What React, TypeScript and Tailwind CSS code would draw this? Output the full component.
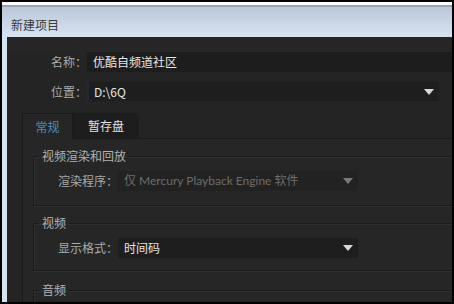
import React from "react";

const font = { fontFamily: '"Microsoft YaHei", "Noto Sans CJK SC", "Noto Sans", sans-serif' };
const latin = { fontFamily: 'Lato, "Noto Sans CJK SC", sans-serif' };

function Arrow({ dim = false }: { dim?: boolean }) {
  return (
    <svg width="10" height="6" viewBox="0 0 10 6" className="shrink-0">
      <path d="M0 0 H10 L5 6 Z" fill={dim ? "#7a7a7a" : "#d8d8d8"} />
    </svg>
  );
}

function Group({ title, children, className = "" }: { title: string; children?: React.ReactNode; className?: string }) {
  return (
    <fieldset className={`border border-[#1a1a1a] shadow-[inset_1px_1px_0_#303030,1px_1px_0_#303030] ${className}`}>
      <legend className="ml-[5px] px-[3px] text-[12px] leading-[16px] text-[#b2b2b2]">{title}</legend>
      {children}
    </fieldset>
  );
}

export default function App() {
  return (
    <div className="w-[454px] h-[304px] bg-black overflow-hidden flex flex-col pt-[2px] pl-[2px] pr-[2px] pb-[2px]" style={font}>
      <div className="h-[3px] bg-white shrink-0" />
      <div className="h-[2px] bg-[#9aa3ad] shrink-0" />
      <div className="flex-1 flex flex-col bg-[#d5e2f0] overflow-hidden">
        {/* title bar */}
        <div className="h-[30px] shrink-0 bg-gradient-to-b from-[#b9c8d9] to-[#d6e3f1] flex items-center pl-[9px] pt-[6px]">
          <span className="text-[12px] text-[#3a3a3a]">新建项目</span>
        </div>

        {/* dark content */}
        <div className="flex-1 ml-[5px] bg-[#242424] overflow-hidden flex flex-col">
          <div className="h-[15px] bg-[#262626] shrink-0" />
          <div className="flex items-center h-[20px] shrink-0">
            <span className="w-[80px] text-right text-[12px] text-[#a9a9a9]">名称：</span>
            <div className="flex-1 h-full bg-[#1d1d1d] flex items-center pl-[6px] text-[12px] text-[#e6e6e6]">
              优酷自频道社区
            </div>
          </div>
          <div className="flex items-center h-[19px] mt-[10px] shrink-0">
            <span className="w-[80px] text-right text-[12px] text-[#a9a9a9]">位置：</span>
            <div className="w-[352px] h-full bg-[#1e1e1e] flex items-center pl-[5px] pr-[5px] text-[12px] text-[#e6e6e6] border-l-2 border-[#1c2a3a]">
              <span className="flex-1">D:\6Q</span>
              <Arrow />
            </div>
          </div>

          {/* tabs */}
          <div className="ml-[15px] mt-[12px] flex h-[26px] shrink-0">
            <div className="w-[51px] bg-[#262626] border border-b-0 border-[#1a1a1a] flex items-center justify-center text-[12px] text-[#3f8fcf]">
              常规
            </div>
            <div className="w-[66px] bg-[#1d1d1d] border-b border-[#1a1a1a] flex items-center justify-center text-[12px] text-[#e2e2e2]">
              暂存盘
            </div>
            <div className="flex-1 border-b border-[#1a1a1a]" />
          </div>

          {/* panel */}
          <div className="ml-[15px] mr-[-20px] flex-1 bg-[#262626] border-l border-[#1a1a1a] pl-[10px] pt-[9px] flex flex-col">
            <Group title="视频渲染和回放" className="pb-[14px]">
              <div className="flex items-center h-[20px] mt-[7px]">
                <span className="w-[84px] text-right text-[12px] text-[#a9a9a9]">渲染程序：</span>
                <div className="w-[240px] h-full bg-[#222222] flex items-center pl-[6px] pr-[5px] text-[12px] text-[#6c6c6c]">
                  <span className="flex-1" style={latin}>仅 Mercury Playback Engine 软件</span>
                  <Arrow dim />
                </div>
              </div>
            </Group>
            <Group title="视频" className="mt-[9px] pb-[12px]">
              <div className="flex items-center h-[20px] mt-[7px]">
                <span className="w-[84px] text-right text-[12px] text-[#a9a9a9]">显示格式：</span>
                <div className="w-[240px] h-full bg-[#1e1e1e] flex items-center pl-[6px] pr-[5px] text-[12px] text-[#e6e6e6]">
                  <span className="flex-1">时间码</span>
                  <Arrow />
                </div>
              </div>
            </Group>
            <Group title="音频" className="mt-[11px] h-[40px]" />
          </div>
        </div>
      </div>
    </div>
  );
}
